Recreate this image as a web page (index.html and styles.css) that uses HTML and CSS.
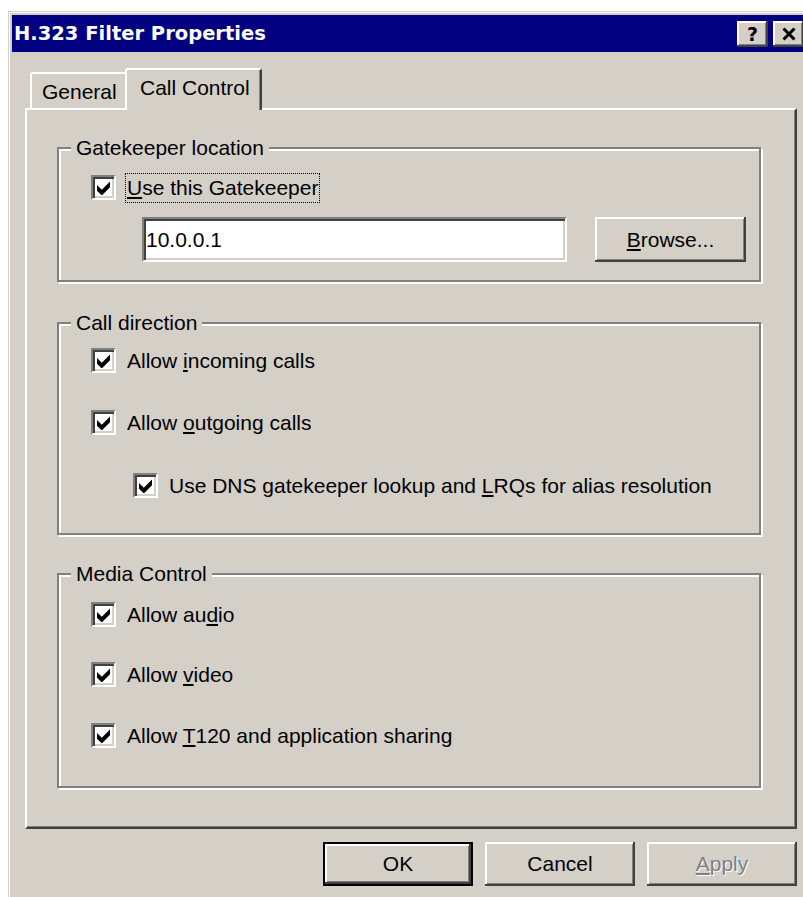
FILE: index.html
```html
<!DOCTYPE html>
<html>
<head>
<meta charset="utf-8">
<title>H.323 Filter Properties</title>
<link rel="stylesheet" href="styles.css">
</head>
<body>
<div class="window">
  <div class="titlebar">
    <span class="title">H.323 Filter Properties</span>
    <div class="caption-buttons">
      <div class="caption-btn help">?</div>
      <div class="caption-btn close">
        <svg width="16" height="14" viewBox="0 0 16 14"><path d="M2.5 1.5L13.5 12.5M13.5 1.5L2.5 12.5" stroke="#000" stroke-width="3" fill="none"/></svg>
      </div>
    </div>
  </div>

  <div class="client">
    <div class="tabs">
      <div class="tab">General</div>
      <div class="tab active">Call Control</div>
    </div>

    <div class="panel">
      <fieldset class="group gatekeeper">
        <legend>Gatekeeper location</legend>
        <div class="check-row">
          <span class="checkbox"><svg class="tick" viewBox="0 0 7 7.5"><path d="M0 2L2.5 4.5L7 0V3L2.5 7.5L0 5Z"/></svg></span>
          <span class="label focus"><u>U</u>se this Gatekeeper</span>
        </div>
        <div class="field-row">
          <div class="textbox">10.0.0.1</div>
          <div class="button browse"><span><u>B</u>rowse...</span></div>
        </div>
      </fieldset>

      <fieldset class="group direction">
        <legend>Call direction</legend>
        <div class="check-row">
          <span class="checkbox"><svg class="tick" viewBox="0 0 7 7.5"><path d="M0 2L2.5 4.5L7 0V3L2.5 7.5L0 5Z"/></svg></span>
          <span class="label">Allow <u>i</u>ncoming calls</span>
        </div>
        <div class="check-row">
          <span class="checkbox"><svg class="tick" viewBox="0 0 7 7.5"><path d="M0 2L2.5 4.5L7 0V3L2.5 7.5L0 5Z"/></svg></span>
          <span class="label">Allow <u>o</u>utgoing calls</span>
        </div>
        <div class="check-row indent">
          <span class="checkbox"><svg class="tick" viewBox="0 0 7 7.5"><path d="M0 2L2.5 4.5L7 0V3L2.5 7.5L0 5Z"/></svg></span>
          <span class="label">Use DNS gatekeeper lookup and <u>L</u>RQs for alias resolution</span>
        </div>
      </fieldset>

      <fieldset class="group media">
        <legend>Media Control</legend>
        <div class="check-row">
          <span class="checkbox"><svg class="tick" viewBox="0 0 7 7.5"><path d="M0 2L2.5 4.5L7 0V3L2.5 7.5L0 5Z"/></svg></span>
          <span class="label">Allow au<u>d</u>io</span>
        </div>
        <div class="check-row">
          <span class="checkbox"><svg class="tick" viewBox="0 0 7 7.5"><path d="M0 2L2.5 4.5L7 0V3L2.5 7.5L0 5Z"/></svg></span>
          <span class="label">Allow <u>v</u>ideo</span>
        </div>
        <div class="check-row">
          <span class="checkbox"><svg class="tick" viewBox="0 0 7 7.5"><path d="M0 2L2.5 4.5L7 0V3L2.5 7.5L0 5Z"/></svg></span>
          <span class="label">Allow <u>T</u>120 and application sharing</span>
        </div>
      </fieldset>
    </div>

    <div class="dialog-buttons">
      <div class="button default"><span>OK</span></div>
      <div class="button"><span>Cancel</span></div>
      <div class="button disabled"><span><u>A</u>pply</span></div>
    </div>
  </div>
</div>
</body>
</html>
```

FILE: styles.css
```css
* {
  box-sizing: border-box;
}

html,
body {
  margin: 0;
  padding: 0;
  background: #fff;
  overflow: hidden;
}

body {
  width: 803px;
  height: 897px;
  font-family: "Liberation Sans", Arial, sans-serif;
  font-size: 21px;
  line-height: 24px;
  color: #000;
}

/* Window frame */
.window {
  margin: 11px 0 0 8px;
  width: 802px;
  height: 900px;
  background: #d4d0c8;
  border: 1px solid #d4d0c8;
  box-shadow: inset 1px 1px #fff;
  padding: 3px;
}

.titlebar {
  height: 37px;
  background: #000080;
  color: #fff;
  display: flex;
  align-items: center;
  padding: 0 2px;
}

.title {
  font-family: "DejaVu Sans", sans-serif;
  font-weight: bold;
  font-size: 19.5px;
  line-height: 24px;
  white-space: nowrap;
}

.caption-buttons {
  margin-left: auto;
  display: flex;
  gap: 5px;
}

.caption-btn {
  width: 31px;
  height: 26px;
  background: #d4d0c8;
  box-shadow: inset -2px -2px #404040, inset 2px 2px #fff, inset -3px -3px #808080;
  display: flex;
  align-items: center;
  justify-content: center;
  color: #000;
  font-family: "DejaVu Sans", sans-serif;
  font-weight: bold;
  font-size: 19px;
  line-height: 20px;
}

.caption-btn.close svg {
  margin-top: 1px;
}

/* Client area */
.client {
  padding: 16px 0 0 13px;
}

.tabs {
  display: flex;
  align-items: flex-end;
  height: 40px;
  margin-left: 5px;
}

.tab {
  width: 95px;
  height: 36px;
  padding: 6px 0 0 10px;
  background: #d4d0c8;
  border-top: 2px solid #fff;
  border-left: 2px solid #fff;
  border-radius: 3px 0 0 0;
  white-space: nowrap;
}

.tab.active {
  width: 137px;
  height: 42px;
  margin-bottom: -2px;
  padding-left: 13px;
  border-right: 2px solid #404040;
  border-radius: 3px 3px 0 0;
  box-shadow: inset -1px 0 #808080;
  position: relative;
  z-index: 1;
}

.panel {
  width: 772px;
  height: 721px;
  border: 2px solid;
  border-color: #fff #404040 #404040 #fff;
  box-shadow: inset -1px -1px #808080;
  padding: 26px 0 0 30px;
}

/* Group boxes */
.group {
  width: 704px;
  min-inline-size: 0;
  margin: 0;
  padding: 0;
  border: 2px solid #808080;
  box-shadow: inset 2px 2px #fff, 2px 2px #fff;
}

.group legend {
  margin-left: 12px;
  padding: 0 5px;
  line-height: 24px;
  background: #d4d0c8;
}

.gatekeeper {
  padding-bottom: 18px;
}

.direction {
  margin-top: 29px;
  padding-bottom: 32px;
}

.media {
  margin-top: 27px;
  padding-bottom: 35px;
}

.check-row {
  display: flex;
  align-items: center;
  height: 31px;
  margin-left: 32px;
}

.check-row.indent {
  margin-left: 74px;
}

.gatekeeper .check-row {
  margin-top: 12px;
}

.direction .check-row:nth-of-type(1) { margin-top: 10px; }
.direction .check-row:nth-of-type(2) { margin-top: 31px; }
.direction .check-row:nth-of-type(3) { margin-top: 32px; }

.media .check-row:nth-of-type(1) { margin-top: 13px; }
.media .check-row:nth-of-type(2) { margin-top: 29px; }
.media .check-row:nth-of-type(3) { margin-top: 30px; }

.checkbox {
  flex: none;
  width: 25px;
  height: 25px;
  background: #fff;
  border: 2px solid;
  border-color: #808080 #fff #fff #808080;
  box-shadow: inset 2px 2px #404040, inset -2px -2px #d4d0c8;
  display: flex;
  align-items: center;
  justify-content: center;
}

.tick {
  width: 13.5px;
  height: 14.5px;
  fill: #000;
  margin-top: 1px;
}

.label {
  margin-left: 9px;
  border: 1px solid transparent;
  padding: 2px 1px;
  line-height: 24px;
  white-space: nowrap;
}

.label.focus {
  border: 1px dotted #000;
}

u {
  text-underline-offset: 2px;
}

/* Edit field and push buttons */
.field-row {
  display: flex;
  margin: 14px 0 0 83px;
  height: 45px;
}

.textbox {
  width: 425px;
  height: 45px;
  background: #fff;
  border: 2px solid;
  border-color: #808080 #fff #fff #808080;
  box-shadow: inset 2px 2px #404040, inset -2px -2px #d4d0c8;
  padding-left: 2px;
  display: flex;
  align-items: center;
}

.button {
  width: 150px;
  height: 44px;
  background: #d4d0c8;
  box-shadow: inset -2px -2px #404040, inset 2px 2px #fff, inset -3px -3px #808080;
  display: flex;
  align-items: center;
  justify-content: center;
  white-space: nowrap;
}

.button.browse {
  width: 151px;
  height: 45px;
  margin-left: 28px;
}

.button.default {
  border: 2px solid #000;
}

.button.disabled {
  color: #808080;
  text-shadow: 1px 1px #fff;
}

.dialog-buttons {
  display: flex;
  justify-content: flex-end;
  gap: 12px;
  width: 772px;
  margin-top: 13px;
}
```
